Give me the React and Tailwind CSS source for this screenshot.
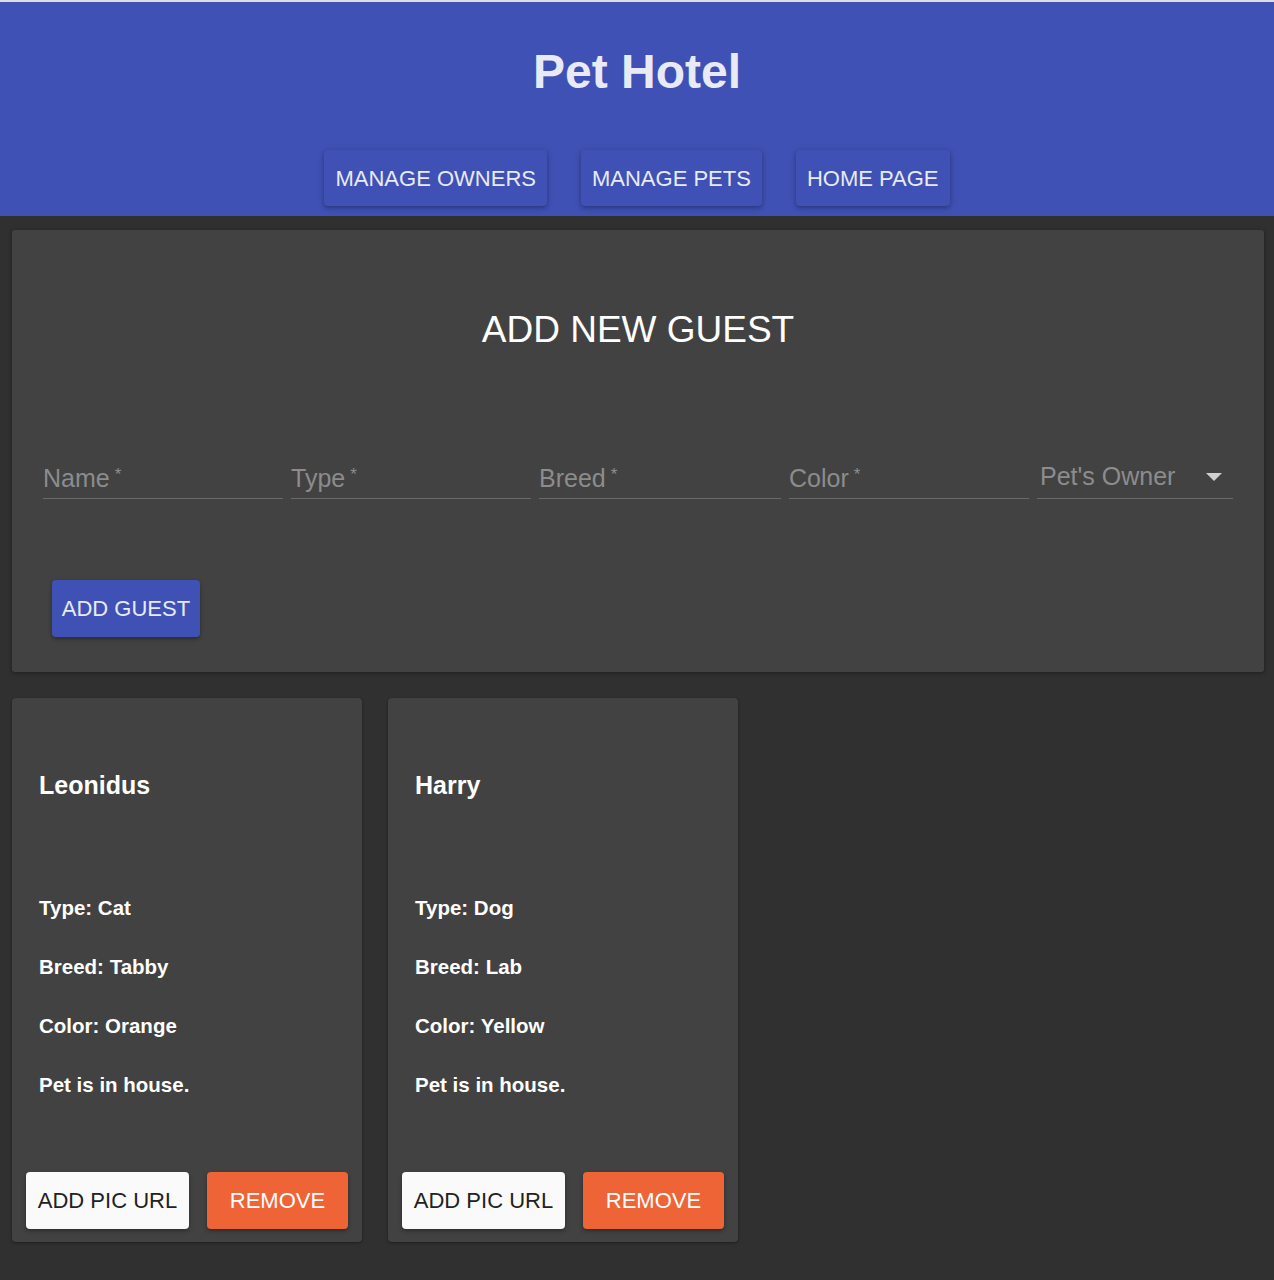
import React from "react";

const pets = [
  { name: "Leonidus", type: "Cat", breed: "Tabby", color: "Orange" },
  { name: "Harry", type: "Dog", breed: "Lab", color: "Yellow" },
];

const fields = [
  { label: "Name", w: "w-[240px]" },
  { label: "Type", w: "w-[240px]" },
  { label: "Breed", w: "w-[242px]" },
  { label: "Color", w: "w-[240px]" },
];

const NavButton = ({ children }) => (
  <button className="h-[56px] px-[11px] rounded-[4px] bg-[#3f51b5] text-[22px] text-[#e8eaf6] shadow-[0_2px_4px_rgba(0,0,0,0.25),0_1px_8px_rgba(0,0,0,0.12)]">
    {children}
  </button>
);

const PetCard = ({ pet }) => (
  <div className="w-[350px] h-[544px] flex flex-col bg-[#424242] rounded-[4px] shadow-[0_1px_3px_rgba(0,0,0,0.4)] text-white">
    <div className="px-[27px] pt-[72px]">
      <h2 className="text-[25px] leading-[30px] font-bold">{pet.name}</h2>
      <div className="mt-[96px] flex flex-col gap-[35px] text-[20.5px] leading-[24px] font-bold">
        <p>Type: {pet.type}</p>
        <p>Breed: {pet.breed}</p>
        <p>Color: {pet.color}</p>
        <p>Pet is in house.</p>
      </div>
    </div>
    <div className="mt-auto flex gap-[18px] px-[14px] pb-[13px]">
      <button className="h-[57px] w-[164px] rounded-[4px] bg-[#fafafa] text-[22px] text-[#222] shadow-[0_2px_4px_rgba(0,0,0,0.35)]">
        ADD PIC URL
      </button>
      <button className="h-[57px] w-[142px] rounded-[4px] bg-[#ee6437] text-[22px] text-white shadow-[0_2px_4px_rgba(0,0,0,0.35)]">
        REMOVE
      </button>
    </div>
  </div>
);

export default function App() {
  return (
    <div className="min-h-[1280px] bg-[#303030] font-['Liberation_Sans',Arial,sans-serif]">
      {/* header */}
      <header className="border-t-2 border-[#dcdde3] bg-[#3f51b5] pt-[42px] pb-[10px] flex flex-col items-center">
        <h1 className="text-[48px] leading-[56px] font-bold text-[#e8eaf6]">Pet Hotel</h1>
        <nav className="mt-[50px] flex gap-[34px]">
          <NavButton>MANAGE OWNERS</NavButton>
          <NavButton>MANAGE PETS</NavButton>
          <NavButton>HOME PAGE</NavButton>
        </nav>
      </header>

      {/* add guest form */}
      <section className="mt-[14px] ml-[12px] mr-[10px] h-[442px] bg-[#424242] rounded-[3px] shadow-[0_1px_4px_rgba(0,0,0,0.4)] px-[31px] pt-[78px]">
        <h2 className="text-center text-[37px] leading-[44px] text-white">ADD NEW GUEST</h2>
        <div className="mt-[111px] flex gap-[8px]">
          {fields.map((f) => (
            <div key={f.label} className={`${f.w} h-[36px] border-b border-[#6a6a6a] text-[25px] leading-[30px] text-[#8c8c8c]`}>
              {f.label}
              <span className="text-[17px] align-top ml-[5px] relative top-[-3px]">*</span>
            </div>
          ))}
          <div className="w-[196px] h-[36px] border-b border-[#6a6a6a] flex items-start justify-between pr-[11px] text-[25px] leading-[26px] text-[#8c8c8c]">
            <span className="pl-[3px]">Pet's Owner</span>
            <svg width="16" height="8" viewBox="0 0 16 8" className="mt-[10px]">
              <path d="M0 0h16L8 8z" fill="#d0d0d0" />
            </svg>
          </div>
        </div>
        <button className="mt-[81px] ml-[9px] h-[57px] w-[148px] rounded-[4px] bg-[#3f51b5] text-[22px] text-[#e8eaf6] shadow-[0_2px_4px_rgba(0,0,0,0.35)]">
          ADD GUEST
        </button>
      </section>

      {/* pet cards */}
      <div className="mt-[26px] ml-[12px] flex gap-[26px]">
        {pets.map((p) => (
          <PetCard key={p.name} pet={p} />
        ))}
      </div>
    </div>
  );
}
